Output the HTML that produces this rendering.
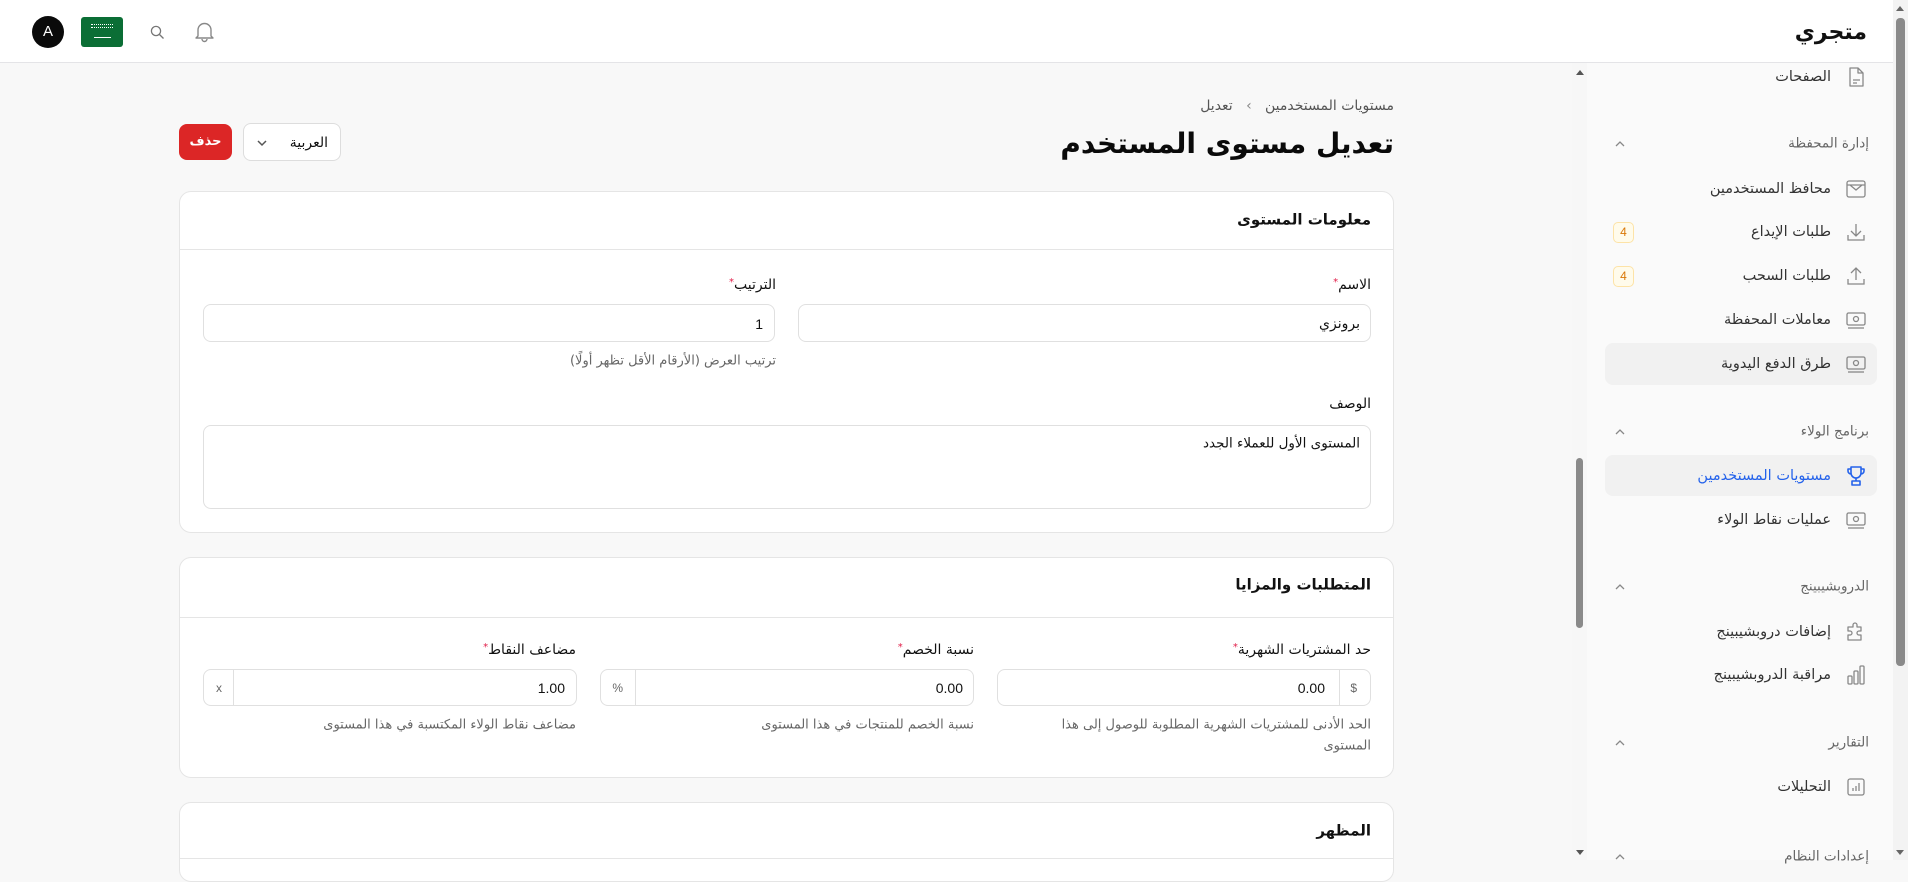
<!DOCTYPE html>
<html lang="ar"><head><meta charset="utf-8">
<style>
*{box-sizing:border-box;margin:0;padding:0}
body{width:1908px;height:860px;overflow:hidden;background:#f8f8f8;font-family:"DejaVu Sans","Liberation Sans",sans-serif;color:#111;position:relative}
.a{position:absolute}
.t{position:absolute;direction:rtl;white-space:nowrap;transform:translateY(-50%);line-height:1}
.hdr{left:0;top:0;width:1908px;height:63px;background:#fff;border-bottom:1px solid #e4e4e7}
.side{left:1587px;top:63px;width:321px;height:797px;background:#fafafa}
.card{left:179px;width:1215px;background:#fff;border:1px solid #e5e5e5;border-radius:12px}
.inp{position:absolute;background:#fff;border:1px solid #e0e0e0;border-radius:8px}
.lbl{font-size:14px;color:#111}
.help{font-size:13px;color:#666}
.req{color:#e11d48;font-size:10px;vertical-align:top}
.si{font-size:14.5px;color:#333}
.sh{font-size:13.5px;color:#666}
.ic{position:absolute;width:22px;height:22px}
.badge{position:absolute;left:1613px;width:21px;height:21px;border:1px solid #fde3a7;background:#fffbeb;border-radius:5px;color:#d97706;font-size:12px;text-align:center;line-height:19px;font-family:"Liberation Sans",sans-serif}
.chev{position:absolute;left:1614px;width:12px;height:8px}
</style></head><body>

<div class="a hdr"></div>
<div class="a" style="left:32px;top:16px;width:32px;height:32px;border-radius:50%;background:#0a0a0a;color:#fff;font:15px 'Liberation Sans',sans-serif;text-align:center;line-height:32px">A</div>
<div class="a" style="left:81px;top:17px;width:42px;height:30px;background:#0b6e35;border-radius:3px"></div>
<div class="a" style="left:91px;top:24px;width:22px;height:4px;border-top:1px dotted #fff;border-bottom:1px dotted #fff"></div>
<div class="a" style="left:94px;top:37px;width:17px;height:1px;background:#fff"></div>
<svg class="a" style="left:150px;top:25px" width="15" height="15" viewBox="0 0 15 15"><circle cx="6" cy="6" r="4.6" fill="none" stroke="#777" stroke-width="1.3"/><path d="M9.5 9.5L13.5 13.5" stroke="#777" stroke-width="1.3"/></svg>
<svg class="a" style="left:194px;top:20px" width="21" height="23" viewBox="0 0 21 23"><path d="M4 16V10a6.5 6.5 0 0 1 13 0v6l2 2H2z M8 19a2.5 2.5 0 0 0 5 0" fill="none" stroke="#888" stroke-width="1.4" stroke-linejoin="round"/></svg>
<div class="t" style="right:41px;top:33px;font-size:22px;font-weight:bold;color:#111">متجري</div>

<!-- content scrollbar -->
<div class="a" style="left:1572px;top:63px;width:15px;height:797px;background:#f7f7f7"></div>
<div class="a" style="left:1576px;top:458px;width:7px;height:170px;background:#8a8a8a;border-radius:4px"></div>
<div class="a" style="left:1576px;top:70px;width:0;height:0;border-left:4px solid transparent;border-right:4px solid transparent;border-bottom:5px solid #555"></div>
<div class="a" style="left:1576px;top:850px;width:0;height:0;border-left:4px solid transparent;border-right:4px solid transparent;border-top:5px solid #555"></div>

<!-- breadcrumb + title -->
<div class="t" style="right:514px;top:106px;font-size:14px;color:#555">مستويات المستخدمين &nbsp;&nbsp;<span style="color:#888">›</span>&nbsp;&nbsp; تعديل</div>
<div class="t" style="right:514px;top:144px;font-size:28px;font-weight:bold;color:#0a0a0a">تعديل مستوى المستخدم</div>
<div class="a" style="left:179px;top:124px;width:53px;height:36px;background:#dc2626;border-radius:8px;color:#fff;font-size:13px;font-weight:bold;text-align:center;line-height:36px">حذف</div>
<div class="a" style="left:243px;top:123px;width:98px;height:38px;background:#fff;border:1px solid #ddd;border-radius:8px"></div>
<div class="t" style="right:1580px;top:143px;font-size:14px">العربية</div>
<svg class="a" style="left:256px;top:139px" width="12" height="8" viewBox="0 0 12 8"><path d="M2 2l4 4 4-4" fill="none" stroke="#555" stroke-width="1.5"/></svg>

<!-- card 1 -->
<div class="a card" style="top:191px;height:342px"></div>
<div class="a" style="left:180px;top:249px;width:1213px;height:1px;background:#e5e5e5"></div>
<div class="t" style="right:537px;top:220px;font-size:15px;font-weight:bold">معلومات المستوى</div>
<div class="t lbl" style="right:537px;top:285px">الاسم<span class="req">*</span></div>
<div class="inp" style="left:798px;top:304px;width:573px;height:38px"></div>
<div class="t" style="right:548px;top:324px;font-size:14px">برونزي</div>
<div class="t lbl" style="right:1132px;top:285px">الترتيب<span class="req">*</span></div>
<div class="inp" style="left:203px;top:304px;width:572px;height:38px"></div>
<div class="t" style="right:1145px;top:324px;font-size:14px;font-family:'Liberation Sans',sans-serif">1</div>
<div class="t help" style="right:1132px;top:361px">ترتيب العرض (الأرقام الأقل تظهر أولًا)</div>
<div class="t lbl" style="right:537px;top:404px">الوصف</div>
<div class="inp" style="left:203px;top:425px;width:1168px;height:84px"></div>
<div class="t" style="right:548px;top:444px;font-size:13.5px">المستوى الأول للعملاء الجدد</div>

<!-- card 2 -->
<div class="a card" style="top:557px;height:221px"></div>
<div class="a" style="left:180px;top:617px;width:1213px;height:1px;background:#e5e5e5"></div>
<div class="t" style="right:537px;top:585px;font-size:15px;font-weight:bold">المتطلبات والمزايا</div>

<div class="t lbl" style="right:537px;top:650px">حد المشتريات الشهرية<span class="req">*</span></div>
<div class="inp" style="left:997px;top:669px;width:374px;height:37px"></div>
<div class="a" style="left:1339px;top:670px;width:1px;height:35px;background:#e0e0e0"></div>
<div class="t" style="right:551px;top:688px;font-size:12px;color:#666;font-family:'Liberation Sans',sans-serif">$</div>
<div class="t" style="right:583px;top:688px;font-size:14px;font-family:'Liberation Sans',sans-serif">0.00</div>
<div class="t help" style="right:537px;top:725px">الحد الأدنى للمشتريات الشهرية المطلوبة للوصول إلى هذا</div>
<div class="t help" style="right:537px;top:746px">المستوى</div>

<div class="t lbl" style="right:934px;top:650px">نسبة الخصم<span class="req">*</span></div>
<div class="inp" style="left:600px;top:669px;width:374px;height:37px"></div>
<div class="a" style="left:635px;top:670px;width:1px;height:35px;background:#e0e0e0"></div>
<div class="t" style="right:1285px;top:688px;font-size:12px;color:#666;font-family:'Liberation Sans',sans-serif">%</div>
<div class="t" style="right:945px;top:688px;font-size:14px;font-family:'Liberation Sans',sans-serif">0.00</div>
<div class="t help" style="right:934px;top:725px">نسبة الخصم للمنتجات في هذا المستوى</div>

<div class="t lbl" style="right:1332px;top:650px">مضاعف النقاط<span class="req">*</span></div>
<div class="inp" style="left:203px;top:669px;width:374px;height:37px"></div>
<div class="a" style="left:233px;top:670px;width:1px;height:35px;background:#e0e0e0"></div>
<div class="t" style="right:1686px;top:688px;font-size:12px;color:#666;font-family:'Liberation Sans',sans-serif">x</div>
<div class="t" style="right:1343px;top:688px;font-size:14px;font-family:'Liberation Sans',sans-serif">1.00</div>
<div class="t help" style="right:1332px;top:725px">مضاعف نقاط الولاء المكتسبة في هذا المستوى</div>

<!-- card 3 -->
<div class="a card" style="top:802px;height:80px"></div>
<div class="a" style="left:180px;top:858px;width:1213px;height:1px;background:#e5e5e5"></div>
<div class="t" style="right:537px;top:831px;font-size:15px;font-weight:bold">المظهر</div>

<!-- sidebar -->
<div class="a side"></div>
<div class="a" style="left:1893px;top:0;width:15px;height:860px;background:#f3f3f3"></div>
<div class="a" style="left:1896px;top:18px;width:9px;height:648px;background:#8a8a8a;border-radius:4px"></div>
<div class="a" style="left:1896px;top:6px;width:0;height:0;border-left:4px solid transparent;border-right:4px solid transparent;border-bottom:5px solid #666"></div>
<div class="a" style="left:1896px;top:850px;width:0;height:0;border-left:4px solid transparent;border-right:4px solid transparent;border-top:5px solid #666"></div>

<div class="a" style="left:1605px;top:343px;width:272px;height:42px;background:#f1f1f1;border-radius:8px"></div>
<div class="a" style="left:1605px;top:455px;width:272px;height:41px;background:#f1f1f1;border-radius:8px"></div>

<svg class="ic" style="left:1845px;top:66px" viewBox="0 0 22 22"><path d="M5 2h8l5 5v13H5z M13 2v5h5 M8 14h7 M8 17h4" fill="none" stroke="#888" stroke-width="1.3" stroke-linejoin="round"/></svg>
<div class="t si" style="right:77px;top:77px">الصفحات</div>

<div class="t sh" style="right:39px;top:144px">إدارة المحفظة</div>
<svg class="chev" style="top:140px" viewBox="0 0 12 8"><path d="M2 6l4-4 4 4" fill="none" stroke="#888" stroke-width="1.3"/></svg>

<svg class="ic" style="left:1845px;top:178px" viewBox="0 0 22 22"><rect x="2" y="3" width="18" height="16" rx="2" fill="none" stroke="#888" stroke-width="1.3"/><path d="M2 7h18 M5 7l6 5 6-5" fill="none" stroke="#888" stroke-width="1.3"/></svg>
<div class="t si" style="right:77px;top:189px">محافظ المستخدمين</div>

<svg class="ic" style="left:1845px;top:221px" viewBox="0 0 22 22"><path d="M11 3v12 M6 10l5 5 5-5 M3 14v5h16v-5" fill="none" stroke="#888" stroke-width="1.3"/></svg>
<div class="t si" style="right:77px;top:232px">طلبات الإيداع</div>
<div class="badge" style="top:222px">4</div>

<svg class="ic" style="left:1845px;top:265px" viewBox="0 0 22 22"><path d="M11 15V3 M6 8l5-5 5 5 M3 14v5h16v-5" fill="none" stroke="#888" stroke-width="1.3"/></svg>
<div class="t si" style="right:77px;top:276px">طلبات السحب</div>
<div class="badge" style="top:266px">4</div>

<svg class="ic" style="left:1845px;top:309px" viewBox="0 0 22 22"><rect x="2" y="4" width="18" height="12" rx="1.5" fill="none" stroke="#888" stroke-width="1.3"/><circle cx="11" cy="10" r="2.5" fill="none" stroke="#888" stroke-width="1.3"/><path d="M3 19h16" stroke="#888" stroke-width="1.3"/></svg>
<div class="t si" style="right:77px;top:320px">معاملات المحفظة</div>

<svg class="ic" style="left:1845px;top:353px" viewBox="0 0 22 22"><rect x="2" y="4" width="18" height="12" rx="1.5" fill="none" stroke="#888" stroke-width="1.3"/><circle cx="11" cy="10" r="2.5" fill="none" stroke="#888" stroke-width="1.3"/><path d="M3 19h16" stroke="#888" stroke-width="1.3"/></svg>
<div class="t si" style="right:77px;top:364px">طرق الدفع اليدوية</div>

<div class="t sh" style="right:39px;top:432px">برنامج الولاء</div>
<svg class="chev" style="top:428px" viewBox="0 0 12 8"><path d="M2 6l4-4 4 4" fill="none" stroke="#888" stroke-width="1.3"/></svg>

<svg class="ic" style="left:1845px;top:465px" viewBox="0 0 22 22"><path d="M6 2h10v6a5 5 0 0 1-10 0z M6 4H3v2a3 3 0 0 0 3 3 M16 4h3v2a3 3 0 0 1-3 3 M11 13v3 M7 16h8v4H7z" fill="none" stroke="#2563eb" stroke-width="1.6" stroke-linejoin="round"/></svg>
<div class="t si" style="right:77px;top:476px;color:#2563eb">مستويات المستخدمين</div>

<svg class="ic" style="left:1845px;top:509px" viewBox="0 0 22 22"><rect x="2" y="4" width="18" height="12" rx="1.5" fill="none" stroke="#888" stroke-width="1.3"/><circle cx="11" cy="10" r="2.5" fill="none" stroke="#888" stroke-width="1.3"/><path d="M3 19h16" stroke="#888" stroke-width="1.3"/></svg>
<div class="t si" style="right:77px;top:520px">عمليات نقاط الولاء</div>

<div class="t sh" style="right:39px;top:587px">الدروبشيبينج</div>
<svg class="chev" style="top:583px" viewBox="0 0 12 8"><path d="M2 6l4-4 4 4" fill="none" stroke="#888" stroke-width="1.3"/></svg>

<svg class="ic" style="left:1845px;top:621px" viewBox="0 0 22 22"><path d="M8 4a2 2 0 0 1 4 0v2h4v4h-2a2 2 0 0 0 0 4h2v5H3v-5h2a2 2 0 0 0 0-4H3V6h5z" fill="none" stroke="#888" stroke-width="1.3" stroke-linejoin="round"/></svg>
<div class="t si" style="right:77px;top:632px">إضافات دروبشيبينج</div>

<svg class="ic" style="left:1845px;top:664px" viewBox="0 0 22 22"><rect x="3" y="12" width="4" height="8" rx="1" fill="none" stroke="#888" stroke-width="1.3"/><rect x="9" y="7" width="4" height="13" rx="1" fill="none" stroke="#888" stroke-width="1.3"/><rect x="15" y="2" width="4" height="18" rx="1" fill="none" stroke="#888" stroke-width="1.3"/></svg>
<div class="t si" style="right:77px;top:675px">مراقبة الدروبشيبينج</div>

<div class="t sh" style="right:39px;top:743px">التقارير</div>
<svg class="chev" style="top:739px" viewBox="0 0 12 8"><path d="M2 6l4-4 4 4" fill="none" stroke="#888" stroke-width="1.3"/></svg>

<svg class="ic" style="left:1845px;top:776px" viewBox="0 0 22 22"><rect x="3" y="3" width="16" height="16" rx="2" fill="none" stroke="#888" stroke-width="1.3"/><path d="M8 15v-3 M11 15v-5 M14 15V7" stroke="#888" stroke-width="1.3"/></svg>
<div class="t si" style="right:77px;top:787px">التحليلات</div>

<div class="t sh" style="right:39px;top:857px">إعدادات النظام</div>
<svg class="chev" style="top:853px" viewBox="0 0 12 8"><path d="M2 6l4-4 4 4" fill="none" stroke="#888" stroke-width="1.3"/></svg>

</body></html>
